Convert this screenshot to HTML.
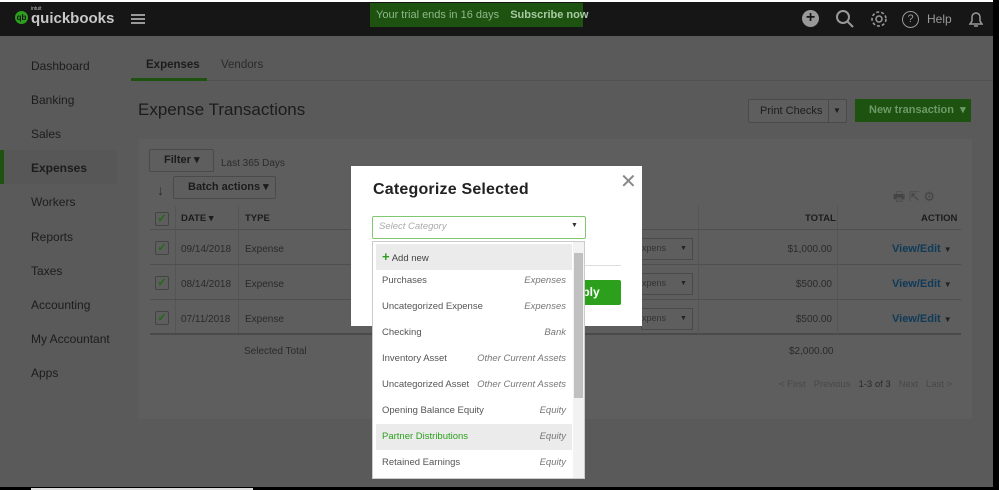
<!DOCTYPE html><html><head><style>
*{box-sizing:border-box;margin:0;padding:0}
body{width:999px;height:490px;overflow:hidden;background:#5a5a5a;font-family:"Liberation Sans",sans-serif;position:relative;font-size:11px;color:#1a1a1a}
.a{position:absolute;white-space:nowrap}
.top{left:0;top:2px;width:993px;height:34px;background:#161616}
.nav{left:31px;color:#1c1c1c;font-size:12px}
.btn{border:1px solid #4a4a4a;border-radius:2px;background:#5e5e5e;color:#1c1c1c;font-weight:bold}
.cb{width:14px;height:14px;border:1px solid #444;border-radius:2px;background:#5e5e5e;color:#1f6a12;font-size:11px;line-height:12px;text-align:center;font-weight:bold}
.row{left:150px;width:811px;height:34px;border-bottom:1px solid #4f4f4f}
.li{left:3px;width:196px;height:26px;line-height:26px;padding:0 6px;font-size:9.5px;color:#555}
.li i{float:right;color:#777}
</style></head><body>
<div class="a" style="left:0;top:0;width:999px;height:2px;background:#fff"></div>
<div class="a top"></div>
<div class="a" style="left:15px;top:11px;width:13px;height:13px;border-radius:50%;background:#2ca01c;color:#111;font-size:8px;line-height:13px;text-align:center;font-weight:bold">qb</div>
<div class="a" style="left:31px;top:6px;color:#bbb;font-size:5px">intuit</div>
<div class="a" style="left:31px;top:10px;color:#c8c8c8;font-size:15px;font-weight:bold">quickbooks</div>
<div class="a" style="left:131px;top:14px;width:14px;height:2px;background:#999;box-shadow:0 4px 0 #999,0 8px 0 #999"></div>
<div class="a" style="left:370px;top:3px;width:213px;height:24px;background:#1d5211;color:#8fb88a;font-size:11px;line-height:24px;padding-left:6px">Your trial ends in 16 days <b style="color:#a9c9a3;margin-left:8px">Subscribe now</b></div>
<div class="a" style="left:802px;top:10px;width:17px;height:17px;border-radius:50%;background:#999;color:#161616;font-size:16px;line-height:16px;text-align:center;font-weight:bold">+</div>
<svg class="a" style="left:835px;top:9px" width="20" height="20"><circle cx="8" cy="8" r="6" stroke="#999" stroke-width="2" fill="none"/><path d="M12 12l6 6" stroke="#999" stroke-width="2"/></svg>
<svg class="a" style="left:869px;top:9px" width="20" height="20"><circle cx="10" cy="10" r="7" stroke="#999" stroke-width="1.6" fill="none" stroke-dasharray="3 2"/><circle cx="10" cy="10" r="3" stroke="#999" stroke-width="1.5" fill="none"/></svg>
<div class="a" style="left:902px;top:11px;width:17px;height:17px;border-radius:50%;border:1.5px solid #999;color:#999;font-size:11px;line-height:14px;text-align:center">?</div>
<div class="a" style="left:927px;top:12px;color:#999;font-size:12px">Help</div>
<svg class="a" style="left:966px;top:9px" width="20" height="20"><path d="M4 15h12l-2-3V8a4 4 0 0 0-8 0v4z M8 17h4" stroke="#999" stroke-width="1.5" fill="none"/></svg>

<div class="a nav" style="top:59px">Dashboard</div>
<div class="a nav" style="top:93px">Banking</div>
<div class="a nav" style="top:127px">Sales</div>
<div class="a" style="left:0;top:150px;width:117px;height:34px;background:#575757;border-left:4px solid #1d5211"></div>
<div class="a nav" style="top:161px;font-weight:bold">Expenses</div>
<div class="a nav" style="top:195px">Workers</div>
<div class="a nav" style="top:230px">Reports</div>
<div class="a nav" style="top:264px">Taxes</div>
<div class="a nav" style="top:298px">Accounting</div>
<div class="a nav" style="top:332px">My Accountant</div>
<div class="a nav" style="top:366px">Apps</div>

<div class="a" style="left:131px;top:80px;width:862px;height:1px;background:#505050"></div>
<div class="a" style="left:131px;top:78px;width:76px;height:3px;background:#1d5211"></div>
<div class="a" style="left:146px;top:59px;font-weight:bold;color:#1c1c1c;font-size:11.5px">Expenses</div>
<div class="a" style="left:221px;top:59px;color:#2a2a2a;font-size:11.5px">Vendors</div>
<div class="a" style="left:138px;top:100px;font-size:17px;color:#1c1c1c">Expense Transactions</div>
<div class="a btn" style="left:748px;top:99px;width:99px;height:24px;line-height:22px;padding-left:11px;font-weight:normal;font-size:11px">Print Checks<span style="position:absolute;left:79px;top:0;width:1px;height:22px;background:#4a4a4a"></span><span style="position:absolute;left:84px;font-size:8px">▼</span></div>
<div class="a" style="left:855px;top:99px;width:116px;height:23px;background:#1d5211;color:#6d9a66;font-weight:bold;line-height:23px;padding-left:14px">New transaction &nbsp;▾</div>

<div class="a" style="left:139px;top:139px;width:833px;height:280px;background:#5e5e5e"></div>
<div class="a btn" style="left:149px;top:149px;width:65px;height:23px;line-height:21px;padding-left:14px">Filter ▾</div>
<div class="a" style="left:221px;top:158px;color:#2c2c2c;font-size:10px">Last 365 Days</div>
<div class="a" style="left:157px;top:182px;color:#2c2c2c;font-size:14px">↓</div>
<div class="a btn" style="left:173px;top:176px;width:103px;height:23px;line-height:21px;padding-left:14px">Batch actions ▾</div>
<div class="a" style="left:150px;top:206px;width:811px;height:24px;border-bottom:1px solid #4f4f4f"></div>
<div class="a" style="left:175px;top:206px;width:1px;height:129px;background:#555"></div>
<div class="a" style="left:238px;top:206px;width:1px;height:129px;background:#555"></div>
<div class="a cb" style="left:155px;top:212px">✓</div>
<div class="a" style="left:181px;top:213px;font-weight:bold;font-size:9.5px;color:#1c1c1c">DATE ▾</div>
<div class="a" style="left:245px;top:213px;font-weight:bold;font-size:9.5px;color:#1c1c1c">TYPE</div>
<div class="a" style="left:805px;top:213px;font-weight:bold;font-size:9.5px;color:#1c1c1c">TOTAL</div>
<div class="a" style="left:921px;top:213px;font-weight:bold;font-size:9.5px;color:#1c1c1c">ACTION</div>
<div class="a" style="left:893px;top:188px;color:#444;font-size:13px">🖶 ⇱ ⚙</div>

<div class="a row" style="top:231px"></div><div class="a row" style="top:266px"></div><div class="a row" style="top:301px;border-bottom:2px solid #4a4a4a"></div>
<div class="a cb" style="left:155px;top:241px">✓</div><div class="a cb" style="left:155px;top:276px">✓</div><div class="a cb" style="left:155px;top:311px">✓</div>
<div class="a" style="left:181px;top:232px;color:#2a2a2a;font-size:10px;line-height:35px">09/14/2018<br>08/14/2018<br>07/11/2018</div>
<div class="a" style="left:245px;top:232px;color:#2a2a2a;font-size:10px;line-height:35px">Expense<br>Expense<br>Expense</div>
<div class="a" style="left:641px;top:238px;width:52px;height:22px;border:1px solid #4a4a4a"></div>
<div class="a" style="left:641px;top:273px;width:52px;height:22px;border:1px solid #4a4a4a"></div>
<div class="a" style="left:641px;top:308px;width:52px;height:22px;border:1px solid #4a4a4a"></div>
<div class="a" style="left:642px;top:231px;color:#333;font-size:9px;line-height:35px">xpens<br>xpens<br>xpens</div>
<div class="a" style="left:680px;top:231px;color:#222;font-size:7px;line-height:35px">▼<br>▼<br>▼</div>
<div class="a" style="left:698px;top:206px;width:1px;height:129px;background:#555"></div>
<div class="a" style="left:837px;top:206px;width:1px;height:129px;background:#555"></div>
<div class="a" style="left:780px;top:232px;width:52px;text-align:right;color:#2a2a2a;font-size:10px;line-height:35px">$1,000.00<br>$500.00<br>$500.00</div>
<div class="a" style="left:892px;top:232px;color:#0f3a58;font-size:11px;font-weight:bold;line-height:35px">View/Edit <span style="color:#222;font-size:8px">▼</span><br>View/Edit <span style="color:#222;font-size:8px">▼</span><br>View/Edit <span style="color:#222;font-size:8px">▼</span></div>
<div class="a" style="left:244px;top:346px;color:#2a2a2a;font-size:10px">Selected Total</div>
<div class="a" style="left:789px;top:346px;color:#2a2a2a;font-size:10px">$2,000.00</div>
<div class="a" style="left:779px;top:379px;color:#484848;font-size:9.5px">&lt; First &nbsp; Previous &nbsp; <span style="color:#2a2a2a">1-3 of 3</span> &nbsp; Next &nbsp; Last &gt;</div>

<div class="a" style="left:351px;top:166px;width:291px;height:160px;background:#fff"></div>
<div class="a" style="left:373px;top:181px;font-size:16px;font-weight:bold;color:#222;letter-spacing:.2px">Categorize Selected</div>
<div class="a" style="left:620px;top:169px;font-size:20px;color:#888">✕</div>
<div class="a" style="left:372px;top:216px;width:214px;height:23px;border:1px solid #7fc870;border-radius:2px"></div>
<div class="a" style="left:379px;top:221px;font-style:italic;color:#aaa;font-size:9.5px">Select Category</div>
<div class="a" style="left:571px;top:222px;font-size:7px;color:#333">▼</div>
<div class="a" style="left:585px;top:265px;width:36px;height:1px;background:#ddd"></div>
<div class="a" style="left:575px;top:280px;width:46px;height:25px;background:#2ca01c;border-radius:2px;color:#fff;font-weight:bold;font-size:12px;line-height:25px">pply</div>

<div class="a" style="left:372px;top:241px;width:213px;height:238px;background:#fff;border:1px solid #ccc">
<div class="a li" style="top:2px;background:#ebebeb;color:#444"><b style="color:#2ca01c;font-size:13px">+</b> Add new</div>
<div class="a li" style="top:26px">Purchases<i>Expenses</i></div>
<div class="a li" style="top:52px">Uncategorized Expense<i>Expenses</i></div>
<div class="a li" style="top:78px">Checking<i>Bank</i></div>
<div class="a li" style="top:104px">Inventory Asset<i>Other Current Assets</i></div>
<div class="a li" style="top:130px">Uncategorized Asset<i>Other Current Assets</i></div>
<div class="a li" style="top:156px">Opening Balance Equity<i>Equity</i></div>
<div class="a li" style="top:182px;background:#ebebeb;color:#2ca01c">Partner Distributions<i>Equity</i></div>
<div class="a li" style="top:208px">Retained Earnings<i>Equity</i></div>
<div class="a" style="left:200px;top:0;width:11px;height:236px;background:#f2f2f2"></div>
<div class="a" style="left:201px;top:11px;width:9px;height:145px;background:#c0c0c0"></div>
</div>

<div class="a" style="left:993px;top:0;width:6px;height:490px;background:#000"></div>
<div class="a" style="left:0;top:487px;width:999px;height:3px;background:#000"></div>
<div class="a" style="left:31px;top:488px;width:222px;height:2px;background:#ddd"></div>
</body></html>
